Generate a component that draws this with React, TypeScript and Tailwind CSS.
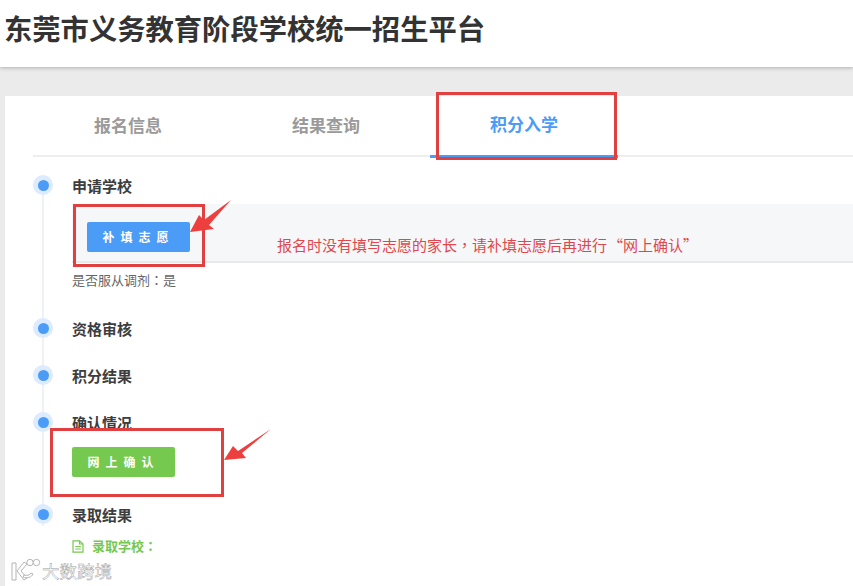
import React from 'react';

const font = { fontFamily: '"Noto Sans CJK SC", "Liberation Sans", sans-serif' };

function Dot() {
  return (
    <span className="flex h-[20px] w-[20px] shrink-0 items-center justify-center rounded-full bg-[#dcebff]">
      <span className="h-[11px] w-[11px] rounded-full bg-[#4a9cf6]" />
    </span>
  );
}

function StepTitle({ title, className }: { title: string; className?: string }) {
  return (
    <div className={`flex h-[20px] items-center gap-[19px] ${className ?? ''}`}>
      <Dot />
      <span className="relative top-px text-[15px] font-bold leading-[20px] text-[#3d3d3d]">{title}</span>
    </div>
  );
}

function Tab({ label, active }: { label: string; active?: boolean }) {
  return (
    <div
      className={`flex h-[62px] w-[188px] items-center justify-center pb-[4px] text-[17px] font-bold ${
        active ? 'border-b-[3px] border-[#4a9cf6] text-[#4a9cf6]' : 'text-[#9a9a9a]'
      }`}
    >
      {label}
    </div>
  );
}

export default function App() {
  return (
    <div className="relative h-[586px] w-[853px] overflow-hidden bg-[#ebebeb]" style={font}>
      {/* header */}
      <div className="flex h-[67px] items-center bg-white pb-[10px] pl-[4px] shadow-[0_1px_4px_rgba(0,0,0,0.25)]">
        <h1 className="text-[28.3px] font-bold leading-none text-[#333333]">东莞市义务教育阶段学校统一招生平台</h1>
      </div>

      <div className="ml-[5px] mt-[29px] h-[490px] bg-white">
        {/* tabs */}
        <div className="ml-[28px] flex h-[61px] gap-[10px] border-b-2 border-[#eeeeee] pl-px">
          <Tab label="报名信息" />
          <Tab label="结果查询" />
          <Tab label="积分入学" active />
        </div>

        {/* steps */}
        <div className="relative pl-[28px] pt-[18px]">
          <div className="absolute bottom-[30px] left-[37px] top-[30px] w-[2px] bg-[#eef1f6]" />
          <div className="relative">
            <StepTitle title="申请学校" />
            <div className="ml-[39px] mt-[9px] flex h-[59px] items-start border-b-2 border-[#e9e9e9] bg-[#f5f7f9] pl-[15px] pt-[18px]">
              <button className="h-[30px] w-[103px] rounded-[2px] bg-[#4a9cf6] text-[12px] font-bold tracking-[6px] text-white">
                补填志愿
              </button>
              <span className="ml-[87px] mt-[15px] text-[15px] leading-none text-[#e0474a]">
                报名时没有填写志愿的家长<span className="font-['Noto_Sans_CJK_TC']">，</span>请补填志愿后再进行
                <span className="ml-px">“网上确认”</span>
              </span>
            </div>
            <p className="ml-[39px] mt-[7px] text-[13px] leading-[20px] text-[#666666]">
              是否服从调剂<span className="font-['Noto_Sans_CJK_TC']">：</span>是
            </p>

            <StepTitle title="资格审核" className="mt-[28px]" />
            <StepTitle title="积分结果" className="mt-[27px]" />
            <StepTitle title="确认情况" className="mt-[27px]" />
            <button className="ml-[39px] mt-[15px] block h-[30px] w-[103px] rounded-[2px] bg-[#75c94e] text-[12px] font-bold tracking-[6px] text-white">
              网上确认
            </button>
            <StepTitle title="录取结果" className="mt-[27px]" />
            <div className="ml-[39px] mt-[12px] flex h-[20px] items-center gap-[8px] text-[13px] font-bold text-[#75c94e]">
              <svg width="12" height="13" viewBox="0 0 12 13" fill="none" stroke="#75c94e" strokeWidth="1.2">
                <path d="M1 .8h6.5L11 4v8.2H1z" />
                <path d="M7.5.8V4H11M3.2 6.5h5.6M3.2 9h5.6" />
              </svg>
              <span>
                录取学校<span className="font-['Noto_Sans_CJK_TC']">：</span>
              </span>
            </div>
          </div>
        </div>
      </div>

      {/* red marks laid over the screenshot */}
      <div className="absolute left-[436px] top-[92px] h-[68px] w-[181px] border-[3px] border-[#e0403f]" />
      <div className="absolute left-[73px] top-[204px] h-[63px] w-[132px] border-[3px] border-[#e0403f]" />
      <div className="absolute left-[50px] top-[428px] h-[69px] w-[174px] border-[3px] border-[#e0403f]" />
      <svg className="absolute left-0 top-0" width="853" height="586" viewBox="0 0 853 586">
        <polygon points="190,232 199,215 204,220 231,200 209,225 214,229" fill="#ee3f3f" />
        <polygon points="224,460 233,446 238,451 271,429 242,453 246,458" fill="#ee3f3f" />
      </svg>

      {/* watermark */}
      <div className="absolute left-[10px] top-[556px] flex items-center gap-[1px]">
        <svg width="31" height="26" viewBox="0 0 31 26" fill="#ffffff" stroke="#adadad" strokeWidth="0.9">
          <path d="M2 7h4v17H2z" />
          <path d="M14 6l3 2-6 7 6 7-3 2-7-9z" />
          <path d="M13 21c4 2 9 0 10-3l-2-1c-1 2-4 3-7 2z" />
          <circle cx="20" cy="6.5" r="3.2" />
          <circle cx="26.5" cy="6.5" r="3.2" />
        </svg>
        <span className="relative top-[2px] text-[17.5px] leading-none text-white [-webkit-text-stroke:0.45px_#9a9a9a]">
          大数跨境
        </span>
      </div>
    </div>
  );
}
